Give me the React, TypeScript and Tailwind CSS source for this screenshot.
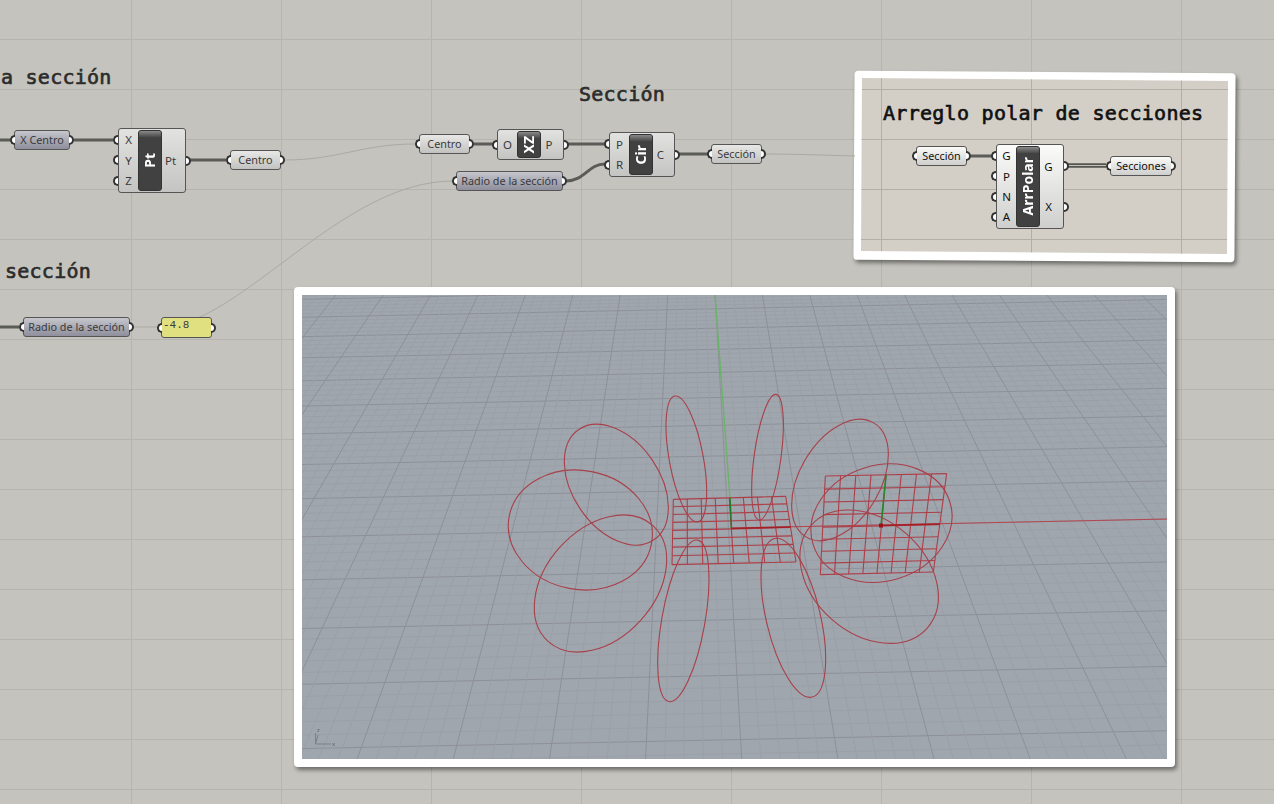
// Lienzo de Grasshopper con el visor de Rhino pegado encima
import type { ReactNode } from "react";

const UI_FONT = "font-['Noto_Sans',sans-serif]";
const TITLE_CLASS =
  "absolute whitespace-nowrap leading-[24px] font-['DejaVu_Sans_Mono',monospace] [-webkit-text-stroke:0.65px_currentColor]";

// --- visor: rejilla en perspectiva ---
const VP = { x: 689, y: -156 };
const GRID_STEP = 47.4;
const ROW_T = 8.64e-5;
const ROW_SLOPE = -0.0206;

const columns = Array.from({ length: 95 }, (_, n) => n - 44).map((i) => {
  const topX = 715 + (i * GRID_STEP) / 5;
  const botX = VP.x + ((topX - VP.x) * (770 - VP.y)) / (295 - VP.y);
  return { id: i, topX, botX, major: i % 5 === 0 };
});

const rows = Array.from({ length: 71 }, (_, n) => n - 47).map((j) => {
  const y = VP.y + 1 / (1 / 684 - (j * ROW_T) / 5);
  return { id: j, y, major: j % 5 === 0 };
});

// --- círculos de la sección: caja y punto superior, medidos a 3x desde (500,380) ---
const ELLIPSES = [
  [193, 133, 505, 495, 290],
  [25, 270, 457, 630, 225],
  [103, 405, 500, 816, 370],
  [498, 48, 620, 426, 527],
  [755, 43, 850, 420, 827],
  [473, 480, 627, 965, 590],
  [783, 475, 977, 952, 830],
  [875, 118, 1165, 482, 1080],
  [933, 252, 1356, 607, 1170],
  [900, 390, 1315, 790, 1045],
].map(([l, t, r, b, topX]) => {
  const cx = (l + r) / 2;
  const cy = (t + b) / 2;
  const hw = (r - l) / 2;
  const hh = (b - t) / 2;
  const cov = (cx - topX) * hh;
  const mean = (hw * hw + hh * hh) / 2;
  const rad = Math.hypot((hw * hw - hh * hh) / 2, cov);
  const angle = (Math.atan2(2 * cov, hw * hw - hh * hh) * 90) / Math.PI;
  return {
    cx: 500 + cx / 3,
    cy: 380 + cy / 3,
    rx: Math.sqrt(mean + rad) / 3,
    ry: Math.sqrt(mean - rad) / 3,
    angle,
  };
});

type Pt = [number, number];

function quadLines(p0: Pt, p1: Pt, p2: Pt, p3: Pt, cells: number) {
  const dx1 = p1[0] - p2[0];
  const dx2 = p3[0] - p2[0];
  const sx = p0[0] - p1[0] + p2[0] - p3[0];
  const dy1 = p1[1] - p2[1];
  const dy2 = p3[1] - p2[1];
  const sy = p0[1] - p1[1] + p2[1] - p3[1];
  const den = dx1 * dy2 - dx2 * dy1;
  const g = (sx * dy2 - dx2 * sy) / den;
  const h = (dx1 * sy - sx * dy1) / den;
  const at = (u: number, v: number): Pt => {
    const w = g * u + h * v + 1;
    return [
      ((p1[0] - p0[0] + g * p1[0]) * u + (p3[0] - p0[0] + h * p3[0]) * v + p0[0]) / w,
      ((p1[1] - p0[1] + g * p1[1]) * u + (p3[1] - p0[1] + h * p3[1]) * v + p0[1]) / w,
    ];
  };
  const out: [Pt, Pt][] = [];
  for (let i = 0; i <= cells; i++) {
    out.push([at(i / cells, 0), at(i / cells, 1)]);
    out.push([at(0, i / cells), at(1, i / cells)]);
  }
  return out;
}

const z5 = (x: number, y: number): Pt => [500 + x / 3, 380 + y / 3];
const planes = [
  ...quadLines(z5(520, 358), z5(857, 349), z5(888, 546), z5(516, 554), 8),
  ...quadLines(z5(976, 288), z5(1340, 281), z5(1300, 576), z5(961, 584), 8),
];

// --- nodos ---
function Grip({ side }: { side: "in" | "out" }) {
  return side === "in" ? (
    <span className="absolute right-full top-1/2 h-[10px] w-[5px] -translate-y-1/2 rounded-l-full border-2 border-r-0 border-[#333] bg-white" />
  ) : (
    <span className="absolute left-full top-1/2 h-[10px] w-[5px] -translate-y-1/2 rounded-r-full border-2 border-l-0 border-[#333] bg-white" />
  );
}

function Param({ className, children, ink = "text-[#3a3a3a]" }: { className: string; children: ReactNode; ink?: string }) {
  return (
    <div
      className={`absolute flex h-[20px] items-center justify-center whitespace-nowrap rounded-[3px] border border-[#555] text-[10.8px] leading-none ${UI_FONT} ${ink} ${className}`}
    >
      <Grip side="in" />
      {children}
      <Grip side="out" />
    </div>
  );
}

function Comp({
  className,
  name,
  inputs,
  outputs,
  bg = "bg-gradient-to-b from-[#e2e2e0] to-[#c4c4c2]",
  ink = "text-[#3a3a3a]",
}: {
  className: string;
  name: string;
  inputs: string[];
  outputs: string[];
  bg?: string;
  ink?: string;
}) {
  return (
    <div
      className={`absolute flex items-stretch rounded-[3px] border border-[#555] py-[1px] text-[11.5px] leading-none ${UI_FONT} ${bg} ${ink} ${className}`}
    >
      <div className="relative flex w-[19px] flex-col">
        {inputs.map((p) => (
          <div key={p} className="relative flex flex-1 items-center justify-center">
            <span className="absolute -left-[1px] top-1/2 h-0 w-0">
              <Grip side="in" />
            </span>
            {p}
          </div>
        ))}
      </div>
      <div className="relative flex w-[24px] items-center justify-center overflow-hidden rounded-[3px] border border-[#333] bg-[#414141]">
        <span className="absolute inset-x-0 top-0 h-[6px] bg-gradient-to-b from-[#8a8a8a] to-[#4a4a4a]" />
        <span className="relative rotate-180 text-[14px] font-bold text-white [writing-mode:vertical-rl]">{name}</span>
      </div>
      <div className="flex flex-1 flex-col pr-[6px]">
        {outputs.map((p) => (
          <div key={p} className="relative flex flex-1 items-center justify-center">
            <span className="absolute -right-[7px] top-1/2 h-0 w-0">
              <Grip side="out" />
            </span>
            {p}
          </div>
        ))}
      </div>
    </div>
  );
}

const BLUE = "bg-gradient-to-b from-[#c6c6cd] to-[#8f8f9d]";
const PALE = "bg-gradient-to-b from-[#e8e8e6] to-[#c2c2c0]";
const WHITE = "bg-gradient-to-b from-[#fbfbfa] to-[#cfcfcd]";

export default function App() {
  return (
    <div className="relative h-[804px] w-[1274px] overflow-hidden bg-[#c4c3bd] bg-[linear-gradient(to_right,#b5b4ae_1px,transparent_1px),linear-gradient(to_bottom,#b5b4ae_1px,transparent_1px)] bg-[size:150px_50px] bg-[position:131px_39px]">
      {/* marco del recuadro inclinado */}
      <div className="absolute left-[854px] top-[71.5px] h-[189px] w-[381px] rotate-[0.35deg] rounded-[4px] bg-white shadow-[2px_3px_4px_rgba(0,0,0,0.45)]" />
      <div className="absolute left-[861px] top-[78px] h-[176px] w-[367px] bg-[#d3cfc7] bg-[linear-gradient(to_right,#b0afa8_1px,transparent_1px),linear-gradient(to_bottom,#b0afa8_1px,transparent_1px)] bg-[size:150px_50px] bg-[position:20px_11px] [clip-path:polygon(1px_0,367px_3px,366px_176px,0_173px)]" />

      {/* cables */}
      <svg className="absolute inset-0" width={1274} height={804} fill="none">
        <g stroke="#aaa9a2" strokeWidth={1}>
          <path d="M284 160 C340 160 360 144 416 144" />
          <path d="M765 154 C790 154 820 155 855 156" />
          <path d="M133 327 H160 C240 327 340 181 453 181" />
        </g>
        <g stroke="#5b5b57" strokeWidth={3}>
          <path d="M0 140 H11" />
          <path d="M74 140 H113" />
          <path d="M189 160 H226" />
          <path d="M474 144 H493" />
          <path d="M567 144 H605" />
          <path d="M678 154 H708" />
          <path d="M0 327 H19" />
          <path d="M566 181 C585 181 588 164 605 164" />
          <path d="M971 156 H992" />
        </g>
        <path d="M1068 165.500 H1106" stroke="#55554f" strokeWidth={4.500} />
        <path d="M1068 165.500 H1106" stroke="#c4c2ba" strokeWidth={1} />
      </svg>

      {/* títulos */}
      <p className={`${TITLE_CLASS} left-[1px] top-[65px] text-[20px] tracking-[0.25px] text-[#2c2c2c]`}>a sección</p>
      <p className={`${TITLE_CLASS} left-[579px] top-[82px] text-[20px] tracking-[0.25px] text-[#2c2c2c]`}>Sección</p>
      <p className={`${TITLE_CLASS} left-[5px] top-[259px] text-[20px] tracking-[0.25px] text-[#2c2c2c]`}>sección</p>
      <p className={`${TITLE_CLASS} left-[883px] top-[101px] text-[20px] tracking-[0.28px] text-[#111]`}>Arreglo polar de secciones</p>

      {/* nodos, fila izquierda */}
      <Param className={`left-[14px] top-[130px] w-[56px] ${BLUE}`}>X Centro</Param>
      <Comp className="left-[118px] top-[128px] h-[65px] w-[68px]" name="Pt" inputs={["X", "Y", "Z"]} outputs={["Pt"]} />
      <Param className={`left-[230px] top-[150px] w-[51px] ${PALE}`}>Centro</Param>

      <Param className={`left-[23px] top-[317px] w-[107px] ${BLUE}`}>Radio de la sección</Param>
      <div className="absolute left-[161px] top-[317px] h-[21px] w-[51px] rounded-[3px] border border-[#555] bg-[#e0e081] pl-[1px] pt-[1px] font-['Liberation_Mono',monospace] text-[11px] leading-[12px] text-[#3a3a3a]">
        <Grip side="in" />
        -4.8
        <Grip side="out" />
      </div>

      {/* nodos, sección */}
      <Param className={`left-[419px] top-[134px] w-[51px] ${PALE}`}>Centro</Param>
      <Comp className="left-[497px] top-[129px] h-[31px] w-[67px]" name="XZ" inputs={["O"]} outputs={["P"]} />
      <Comp className="left-[609px] top-[132px] h-[45px] w-[66px]" name="Cir" inputs={["P", "R"]} outputs={["C"]} />
      <Param className={`left-[456px] top-[171px] w-[107px] ${BLUE}`}>Radio de la sección</Param>
      <Param className={`left-[711px] top-[144px] w-[51px] ${PALE}`}>Sección</Param>

      {/* nodos, recuadro */}
      <Param className={`left-[916px] top-[146px] w-[51px] ${WHITE}`} ink="text-[#111]">Sección</Param>
      <Comp
        className="left-[996px] top-[144px] h-[85px] w-[68px]"
        name="ArrPolar"
        inputs={["G", "P", "N", "A"]}
        outputs={["G", "X"]}
        bg={WHITE}
        ink="text-[#111]"
      />
      <Param className={`left-[1110px] top-[156px] w-[62px] ${WHITE}`} ink="text-[#111]">Secciones</Param>

      {/* visor */}
      <div className="absolute left-[294px] top-[287px] h-[480px] w-[881px] rounded-[4px] bg-white p-[8px] shadow-[2px_3px_4px_rgba(0,0,0,0.45)]">
        <div className="h-[464px] w-[865px] overflow-hidden">
          <svg className="block h-[464px] w-[865px] bg-[#a0a6ae] blur-[0.4px]" viewBox="302 295 865 464" fill="none">
            {rows.map((r) => (
              <line
                key={r.id}
                x1={302}
                y1={r.y + ROW_SLOPE * (302 - 731)}
                x2={1168}
                y2={r.y + ROW_SLOPE * (1168 - 731)}
                stroke={r.major ? "#8e9099" : "#9ba0a8"}
                strokeWidth={1}
              />
            ))}
            {columns.map((c) => (
              <line
                key={c.id}
                x1={c.topX}
                y1={295}
                x2={c.botX}
                y2={770}
                stroke={c.major ? "#8e9099" : "#9ba0a8"}
                strokeWidth={1}
              />
            ))}

            <path d="M715 295 L730 498" stroke="#6bb36b" strokeWidth={1.500} />
            <path d="M731 528 L1168 519" stroke="#b4474f" strokeWidth={1} />

            <g stroke="#ad3f48" strokeWidth={1.100}>
              {planes.map(([a, b], i) => (
                <line key={i} x1={a[0]} y1={a[1]} x2={b[0]} y2={b[1]} />
              ))}
            </g>
            <g stroke="#a8404a" strokeWidth={1.100}>
              {ELLIPSES.map((e, i) => (
                <ellipse
                  key={i}
                  cx={e.cx}
                  cy={e.cy}
                  rx={e.rx}
                  ry={e.ry}
                  transform={`rotate(${e.angle} ${e.cx} ${e.cy})`}
                />
              ))}
            </g>

            <path d="M730 498 L731.500 528.500" stroke="#1f7d2a" strokeWidth={1.500} />
            <path d="M731.500 528.500 L790.500 527" stroke="#a31f26" strokeWidth={1.500} />
            <path d="M886 475 L881 525.500" stroke="#1f8a2a" strokeWidth={1.500} />
            <path d="M881 525.500 L940 524" stroke="#a31f26" strokeWidth={1.500} />
            <rect x={879} y={523.500} width={4} height={4} fill="#9a0f18" />

            {/* widget de ejes */}
            <path d="M315.500 733 V744 H331" stroke="#7b7f88" strokeWidth={1} />
            <path d="M315.500 744 L318 735" stroke="#7b7f88" strokeWidth={1} />
            <text x={332} y={746} fontSize={6} fill="#5f636c" className={UI_FONT}>x</text>
            <text x={317} y={732} fontSize={6} fill="#5f636c" className={UI_FONT}>z</text>
          </svg>
        </div>
      </div>
    </div>
  );
}
